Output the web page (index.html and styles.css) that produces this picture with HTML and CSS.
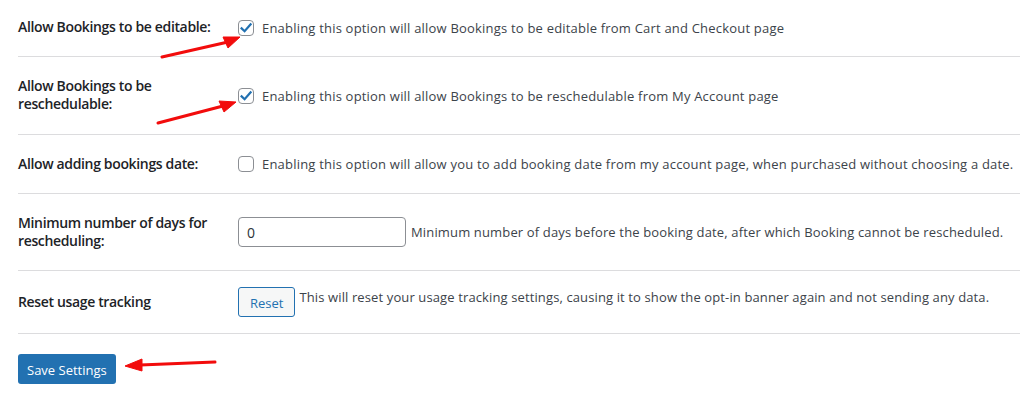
FILE: index.html
```html
<!DOCTYPE html>
<html lang="en">
<head>
<meta charset="utf-8">
<title>Booking settings</title>
<link rel="stylesheet" href="styles.css">
</head>
<body>
<div class="page">
  <form class="settings">
    <div class="row row-first">
      <div class="label">Allow Bookings to be editable:</div>
      <div class="field">
        <span class="checkbox checked"><svg viewBox="0 0 16 16" width="16" height="16"><path d="M3.6 8.4 L6.6 11.2 L12.6 4.4" fill="none" stroke="#2271b1" stroke-width="2.2" stroke-linecap="square" stroke-linejoin="miter"/></svg></span>
        <span class="desc">Enabling this option will allow Bookings to be editable from Cart and Checkout page</span>
      </div>
    </div>
    <div class="row">
      <div class="label label-two">Allow Bookings to be reschedulable:</div>
      <div class="field">
        <span class="checkbox checked"><svg viewBox="0 0 16 16" width="16" height="16"><path d="M3.6 8.4 L6.6 11.2 L12.6 4.4" fill="none" stroke="#2271b1" stroke-width="2.2" stroke-linecap="square" stroke-linejoin="miter"/></svg></span>
        <span class="desc">Enabling this option will allow Bookings to be reschedulable from My Account page</span>
      </div>
    </div>
    <div class="row">
      <div class="label">Allow adding bookings date:</div>
      <div class="field">
        <span class="checkbox"></span>
        <span class="desc">Enabling this option will allow you to add booking date from my account page, when purchased without choosing a date.</span>
      </div>
    </div>
    <div class="row">
      <div class="label">Minimum number of days for rescheduling:</div>
      <div class="field">
        <span class="input">0</span>
        <span class="desc desc-tight">Minimum number of days before the booking date, after which Booking cannot be rescheduled.</span>
      </div>
    </div>
    <div class="row">
      <div class="label">Reset usage tracking</div>
      <div class="field field-top">
        <span class="btn-secondary">Reset</span>
        <span class="desc desc-raised">This will reset your usage tracking settings, causing it to show the opt-in banner again and not sending any data.</span>
      </div>
    </div>
    <div class="actions">
      <span class="btn-primary">Save Settings</span>
    </div>
  </form>
  <svg class="arrows" width="1020" height="400" viewBox="0 0 1020 400">
    <g fill="#f20c0c" stroke="#f20c0c">
      <line x1="162" y1="57" x2="228" y2="42" stroke-width="3" stroke-linecap="round"/>
      <polygon points="240,37 223,37 228,48" stroke-width="1" stroke-linejoin="round"/>
      <line x1="158" y1="123" x2="223" y2="106" stroke-width="3" stroke-linecap="round"/>
      <polygon points="236,102 219,101 224,112" stroke-width="1" stroke-linejoin="round"/>
      <line x1="215" y1="362" x2="140" y2="365" stroke-width="3" stroke-linecap="round"/>
      <polygon points="125,366 142,359 142,371" stroke-width="1" stroke-linejoin="round"/>
    </g>
  </svg>
</div>
</body>
</html>
```

FILE: styles.css
```css
html, body {
  margin: 0;
  padding: 0;
  background: #ffffff;
}

body {
  font-family: "Open Sans", "Noto Sans", "Liberation Sans", sans-serif;
  color: #3c434a;
  font-size: 13px;
}

.page {
  position: relative;
  width: 1020px;
  height: 400px;
  overflow: hidden;
}

.settings {
  padding-left: 18px;
}

.row {
  display: grid;
  grid-template-columns: 220px 1fr;
  align-items: center;
  border-bottom: 1px solid #dcdcde;
}

.label {
  padding: 20px 20px 20px 0;
  font-size: 14px;
  font-weight: 600;
  line-height: 18px;
  color: #1d2327;
  letter-spacing: -0.35px;
}

.label-two {
  padding-bottom: 21px;
}

.row-first .label {
  padding-top: 18px;
}

.field {
  display: flex;
  align-items: center;
  padding: 16px 0;
  white-space: nowrap;
}

.field-top {
  align-items: flex-start;
}

.checkbox {
  box-sizing: border-box;
  width: 16px;
  height: 16px;
  border: 1px solid #8c8f94;
  border-radius: 4px;
  background: #fff;
  display: flex;
  align-items: center;
  justify-content: center;
  margin-right: 8px;
  flex: none;
}

.checkbox svg {
  display: block;
  margin: -1px;
}

.desc {
  font-size: 13px;
  line-height: 18px;
  color: #3c434a;
  letter-spacing: 0.2px;
}

.desc-tight {
  margin-left: 5px;
  letter-spacing: 0.15px;
}

.desc-raised {
  margin-left: 4px;
  line-height: 20px;
  letter-spacing: 0.12px;
}

.input {
  box-sizing: border-box;
  width: 168px;
  height: 30px;
  border: 1px solid #8c8f94;
  border-radius: 4px;
  padding: 0 8px;
  display: flex;
  align-items: center;
  font-size: 14px;
  color: #2c3338;
  background: #fff;
  flex: none;
}

.btn-secondary {
  box-sizing: border-box;
  height: 30px;
  padding: 2px 11px 0;
  border: 1px solid #2271b1;
  border-radius: 3px;
  background: #f6f7f7;
  color: #2271b1;
  font-size: 13px;
  display: flex;
  align-items: center;
  flex: none;
}

.actions {
  padding-top: 20px;
}

.btn-primary {
  box-sizing: border-box;
  display: inline-flex;
  align-items: center;
  height: 30px;
  padding: 1px 9px 0;
  border-radius: 3px;
  background: #2271b1;
  color: #fff;
  font-size: 13px;
}

.arrows {
  position: absolute;
  left: 0;
  top: 0;
  pointer-events: none;
}
```
